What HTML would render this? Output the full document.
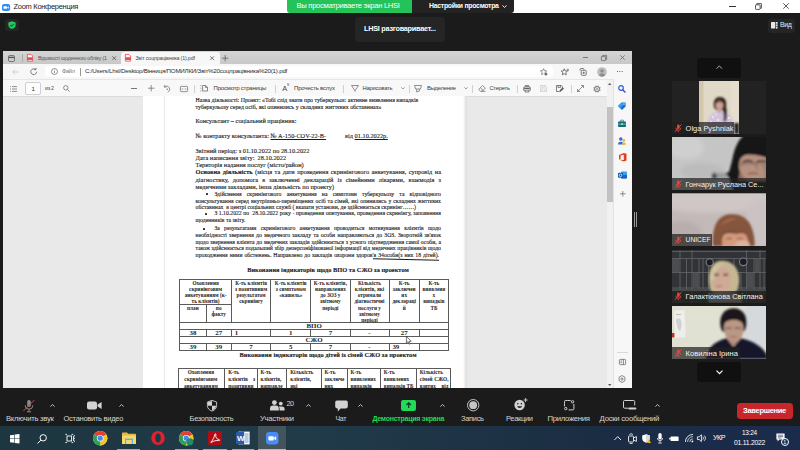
<!DOCTYPE html>
<html><head><meta charset="utf-8"><title>Zoom</title>
<style>
*{box-sizing:border-box;margin:0;padding:0}
html,body{width:800px;height:450px;overflow:hidden;background:#1b1b1b;font-family:"Liberation Sans",sans-serif}
.a{position:absolute;white-space:nowrap}
svg{position:absolute;overflow:visible}
#titlebar{left:0;top:0;width:800px;height:13.100px;background:#fff}
#br{left:3.2px;top:50.5px;width:628.9px;height:338px;background:#e9e9e9;overflow:hidden}
.ui{font-size:6.4px;color:#3a3a3a;letter-spacing:-0.32px;line-height:8px}
.sep{width:1px;height:8px;background:#d0d0d0;top:33px}
.pl{-webkit-text-stroke:.12px #1c1c1c;font-family:"Liberation Serif",serif;font-size:6.33px;line-height:7px;height:7px;color:#1c1c1c;left:192.6px}
.pj{width:245.4px;text-align:justify;text-align-last:justify;white-space:normal}
.ps{font-size:5.74px}
.p11{font-size:5.9px}
.th{font-family:"Liberation Serif",serif;font-weight:bold;font-size:5.25px;line-height:6.1px;color:#222;text-align:center;white-space:normal}
.td{font-family:"Liberation Serif",serif;font-weight:bold;font-size:6.9px;line-height:7px;color:#1c1c1c;text-align:center}
.ln{background:#5a5a5a}
.zl{font-size:7.1px;color:#d6d6d6;line-height:9px;top:414.5px;text-align:center;transform:translateX(-50%)}
.tile{left:672px;width:94px;height:53px;background:#222;overflow:hidden}
.nm{left:0;bottom:0;height:11.8px;background:rgba(32,32,32,.72)}
.arrow{left:697px;width:44px;height:20px;background:#101010;border-radius:3px}
</style></head><body>

<!-- Zoom title bar -->
<div class="a" id="titlebar">
 <svg style="left:1.9px;top:3.7px" width="8.1" height="6.9" viewBox="0 0 9 9" preserveAspectRatio="none"><rect width="9" height="9" rx="2.2" fill="#2d8cff"/><rect x="1.6" y="3" width="4" height="3.2" rx=".8" fill="#fff"/><path d="M6 4.2 L7.6 3.1 V6.100 L6 5z" fill="#fff"/></svg>
 <div class="a" style="left:13.6px;top:2.3px;font-size:7.5px;letter-spacing:-0.301px;line-height:9.38px;color:#1a1a1a;">Zoom Конференция</div>
 <div class="a" style="left:729px;top:6px;width:6.5px;height:1px;background:#333"></div>
 <svg style="left:755px;top:2.5px" width="7" height="7" viewBox="0 0 7 7" fill="none" stroke="#333" stroke-width=".8"><rect x=".5" y="1.8" width="4.6" height="4.6" rx=".6"/><path d="M1.8 1.8V.6H6.4V5.2H5.1"/></svg>
 <svg style="left:782.5px;top:3px" width="6" height="6" viewBox="0 0 6 6" stroke="#333" stroke-width=".8"><path d="M.3 .3L5.7 5.7M5.7 .3L.3 5.7"/></svg>
</div>
<div class="a" style="left:286.5px;top:0;width:126px;height:12.5px;background:#23c35a;border-radius:0 0 0 3px"></div><div class="a" style="left:296.5px;top:1.3px;font-size:7.58px;letter-spacing:-0.267px;line-height:9.47px;color:#fff;">Вы просматриваете экран LHSI</div>
<div class="a" style="left:412px;top:0;width:101.5px;height:12.5px;background:#232323;border-radius:0 0 3px 0"></div><div class="a" style="left:429.0px;top:1.7px;font-size:6.88px;letter-spacing:-0.274px;line-height:8.6px;color:#fff;font-weight:bold;">Настройки просмотра</div>
<svg style="left:502px;top:5px" width="5" height="3" viewBox="0 0 5 3" fill="none" stroke="#fff" stroke-width=".9"><path d="M.4 .4L2.5 2.4L4.6 .4"/></svg>
<!-- security shield -->
<div class="a" style="left:5px;top:18.600px;width:13.700px;height:12.800px;background:#262626;border-radius:3px"></div>
<svg style="left:7.7px;top:21.1px" width="8" height="8.2" viewBox="0 0 9 10" preserveAspectRatio="none"><path d="M4.5 .3L8.6 1.800V4.800C8.600 7.300 6.800 9 4.500 9.800C2.200 9 .4 7.300 .4 4.800V1.800Z" fill="#23c860"/><path d="M2.600 5L4 6.400L6.500 3.700" fill="none" stroke="#0f5a2c" stroke-width="1.2"/></svg>
<!-- speaking toast -->
<div class="a" style="left:355px;top:16.5px;width:90px;height:25px;background:#252525;border-radius:4px"></div><div class="a" style="left:364.0px;top:24.4px;font-size:7.29px;letter-spacing:-0.251px;line-height:9.11px;color:#fff;font-weight:bold;">LHSI разговаривает...</div>
<!-- View button -->
<div class="a" style="left:767.5px;top:18.5px;width:27.5px;height:14px;background:#252525;border-radius:3px"></div><div class="a" style="left:780.0px;top:21.2px;font-size:6.92px;letter-spacing:-0.410px;line-height:8.65px;color:#e8e8e8;">Вид</div>
<svg style="left:771px;top:22px" width="7" height="7" viewBox="0 0 7 7" fill="#e8e8e8"><rect x="0" y="0" width="4.3" height="6.6" rx=".5"/><rect x="5" y="0" width="1.6" height="1.8"/><rect x="5" y="2.4" width="1.6" height="1.8"/><rect x="5" y="4.8" width="1.6" height="1.8"/></svg>

<!-- shared browser window -->
<div class="a" id="br"><div class="a" style="left:-3.2px;top:-50.5px;width:800px;height:450px">
 <div class="a" style="left:3px;top:50px;width:629px;height:14px;background:linear-gradient(#d6d6d6,#c8c8c8)"></div>
 <div class="a" style="left:121px;top:52px;width:98.800px;height:12px;background:#f7f7f7;border-radius:2.5px 2.5px 0 0"></div>
 <div class="a" style="left:3px;top:64px;width:629px;height:15px;background:#f7f7f7"></div>
 <div class="a" style="left:45px;top:65.5px;width:508px;height:11.5px;background:#fff;border-radius:3px"></div>
 <div class="a" style="left:3px;top:79px;width:610px;height:17.6px;background:#f8f8f8;border-top:1px solid #e6e6e6;border-bottom:1px solid #dcdcdc"></div>
 <!-- tab strip -->
 <svg style="left:8px;top:54.5px" width="7" height="7" viewBox="0 0 7 7" fill="none" stroke="#585858" stroke-width=".75"><rect x=".5" y=".5" width="6" height="6" rx="1.2"/><path d="M.5 2.4H6.5" stroke-width="1.4"/></svg>
 <div class="a" style="left:22px;top:54px;width:1px;height:8px;background:#aaa"></div>
 <svg style="left:27px;top:54px" width="6" height="7.5" viewBox="0 0 6 7.5"><path d="M.4 .4H4L5.6 2V7.1H.4Z" fill="#fff" stroke="#e0484f" stroke-width=".8"/><rect x=".4" y="3.3" width="5.2" height="2.6" fill="#e0484f"/></svg>
 <div class="a" style="left:38.0px;top:54.5px;font-size:5.25px;letter-spacing:-0.172px;line-height:6.56px;color:#555;">Відомості щоденного обліку (1</div>
 <svg style="left:112px;top:56px" width="4.4" height="4.4" viewBox="0 0 4.4 4.4" stroke="#585858" stroke-width=".8"><path d="M.3 .3L4.1 4.1M4.1 .3L.3 4.1"/></svg>
 <svg style="left:125px;top:54px" width="6" height="7.5" viewBox="0 0 6 7.5"><path d="M.4 .4H4L5.6 2V7.1H.4Z" fill="#fff" stroke="#e0484f" stroke-width=".8"/><rect x=".4" y="3.3" width="5.2" height="2.6" fill="#e0484f"/></svg>
 <div class="a" style="left:135.6px;top:54.5px;font-size:5.29px;letter-spacing:-0.165px;line-height:6.61px;color:#444;">Звіт соцпрацівника (1).pdf</div>
 <svg style="left:209.8px;top:56px" width="4.4" height="4.4" viewBox="0 0 4.4 4.4" stroke="#585858" stroke-width=".8"><path d="M.3 .3L4.1 4.1M4.1 .3L.3 4.1"/></svg>
 <svg style="left:222px;top:54.5px" width="6.4" height="6.4" viewBox="0 0 6.4 6.4" stroke="#585858" stroke-width=".75"><path d="M3.2 0V6.4M0 3.2H6.4"/></svg>
 <div class="a" style="left:582.5px;top:57.3px;width:5px;height:.8px;background:#777"></div>
 <svg style="left:600.5px;top:54.5px" width="6" height="6" viewBox="0 0 6 6" fill="none" stroke="#6c6c6c" stroke-width=".8"><rect x=".4" y="1.4" width="4.2" height="4.2" rx=".6"/><path d="M1.6 1.4V.4H5.6V4.4H4.6"/></svg>
 <svg style="left:620px;top:55px" width="5" height="5" viewBox="0 0 5 5" stroke="#6c6c6c" stroke-width=".8"><path d="M.3 .3L4.7 4.7M4.7 .3L.3 4.7"/></svg>
 <!-- address bar -->
 <svg style="left:12px;top:68.5px" width="7" height="6" viewBox="0 0 7 6" fill="none" stroke="#c4c4c4" stroke-width=".75"><path d="M6.8 3H.6M3 .5L.5 3L3 5.5"/></svg>
 <svg style="left:29.5px;top:67.5px" width="7.5" height="7.5" viewBox="0 0 7.5 7.5" fill="none" stroke="#585858" stroke-width=".75"><path d="M6.6 3.75A2.9 2.9 0 1 1 5.6 1.5"/><path d="M4.1 1.6H6V-.2" stroke-width=".75"/></svg>
 <svg style="left:51px;top:68px" width="7" height="7" viewBox="0 0 7 7" fill="none" stroke="#666" stroke-width=".7"><circle cx="3.5" cy="3.5" r="3"/><path d="M3.5 3V5.2M3.5 1.6V2.3"/></svg>
 <div class="a" style="left:62.0px;top:67.9px;font-size:5.66px;letter-spacing:-0.305px;line-height:7.08px;color:#777;">Файл</div>
 <div class="a" style="left:80px;top:67.5px;width:1px;height:8px;background:#999"></div>
 <div class="a" style="left:85.0px;top:67.4px;font-size:6.21px;letter-spacing:-0.212px;line-height:7.76px;color:#2a2a2a;">C:/Users/Lhsl/Desktop/Вінниця/ПОМИЛКИ/Звіт%20соцпрацівника%20(1).pdf</div>
 <svg style="left:540px;top:67.5px" width="8" height="8" viewBox="0 0 8 8" fill="none" stroke="#6c6c6c" stroke-width=".75"><path d="M3.6 .7L4.5 2.7L6.7 2.9L5.1 4.3L5.4 5.2M3.6 .7L2.7 2.7L.5 2.9L2.1 4.4L1.6 6.6L3.4 5.6"/><circle cx="5.9" cy="6" r="1.5" fill="#6c6c6c" stroke="none"/></svg>
 <svg style="left:560.5px;top:67.5px" width="8" height="8" viewBox="0 0 8 8" fill="none" stroke="#585858" stroke-width=".8"><path d="M3.3 .8L4.2 2.9L6.4 3.1L4.8 4.6L5.3 6.8L3.3 5.7L1.3 6.8L1.8 4.6L.2 3.1L2.4 2.9Z"/><path d="M5.8 1.3H7.8M5.9 2.6H7.8" stroke-width=".7"/></svg>
 <svg style="left:579px;top:67.5px" width="8" height="8" viewBox="0 0 8 8" fill="none" stroke="#585858" stroke-width=".8"><path d="M1 2.6V1.5A.9 .9 0 0 1 1.9 .6H4.2A.9 .9 0 0 1 5.1 1.5"/><rect x="2.2" y="2.3" width="5" height="5" rx="1"/><path d="M4.7 3.6V6M3.5 4.8H5.9" stroke-width=".7"/></svg>
 <svg style="left:596.5px;top:66.8px" width="10" height="10" viewBox="0 0 10 10"><circle cx="5" cy="5" r="4.8" fill="#bdbdbd"/><circle cx="5" cy="3.9" r="1.7" fill="#8d8d8d"/><path d="M1.9 8.3A3.3 3.3 0 0 1 8.1 8.3A4.7 4.7 0 0 1 1.9 8.3Z" fill="#8d8d8d"/></svg>
 <div class="a" style="left:617.4px;top:71px;width:1.1px;height:1.1px;background:#333;border-radius:50%;box-shadow:2.3px 0 0 #333,4.6px 0 0 #333"></div>

 <!-- pdf toolbar -->
 <svg style="left:10px;top:85.5px" width="7" height="6" viewBox="0 0 7 6" stroke="#6c6c6c" stroke-width=".75"><path d="M0 .6H1M2 .6H7M0 3H1M2 3H7M0 5.4H1M2 5.4H7"/></svg>
 <div class="a" style="left:24.5px;top:82px;width:16.5px;height:12.5px;border:1px solid #cfcfcf;border-radius:2px;background:#fdfdfd"></div>
 <div class="a" style="left:31.4px;top:84.5px;font-size:6.16px;letter-spacing:-0.226px;line-height:7.7px;color:#333;">1</div>
 <div class="a" style="left:45.0px;top:85.0px;font-size:5.2px;letter-spacing:-0.209px;line-height:6.5px;color:#444;">из 2</div>
 <svg style="left:62.5px;top:84.5px" width="7" height="7" viewBox="0 0 7 7" fill="none" stroke="#6c6c6c" stroke-width=".75"><circle cx="2.8" cy="2.8" r="2.2"/><path d="M4.4 4.4L6.7 6.7"/></svg>
 <div class="a" style="left:131px;top:88px;width:6px;height:1px;background:#777"></div>
 <svg style="left:147.5px;top:85.3px" width="6.4" height="6.4" viewBox="0 0 6.4 6.4" stroke="#6c6c6c" stroke-width=".75"><path d="M3.2 0V6.4M0 3.2H6.4"/></svg>
 <svg style="left:163px;top:84.5px" width="8" height="8" viewBox="0 0 8 8" fill="none" stroke="#6c6c6c" stroke-width=".75"><path d="M1.6 1.8A3.1 3.1 0 1 1 4.6 7.1"/><path d="M1.4 .2V2.1H3.4"/><circle cx="4.2" cy="4.2" r=".7" fill="#6c6c6c" stroke="none"/></svg>
 <svg style="left:179.5px;top:85.5px" width="8" height="6" viewBox="0 0 8 6" fill="none" stroke="#6c6c6c" stroke-width=".75"><rect x=".4" y=".4" width="7.2" height="5.2" rx=".8"/><path d="M1.7 3H3.2M4.8 3H6.3"/></svg>
 <div class="a sep" style="left:193.5px;top:84.5px"></div>
 <svg style="left:200px;top:85px" width="8" height="6.5" viewBox="0 0 8 6.5" fill="none" stroke="#6c6c6c" stroke-width=".8"><path d="M.4 .6H1.4M.4 3.2H1.4M.4 5.8H1.4" /><path d="M2.6 .5H5.6L7.5 2.2V6H2.6Z"/><path d="M5.4 .6V2.4H7.4"/></svg>
 <div class="a" style="left:213.6px;top:84.5px;font-size:6.06px;letter-spacing:-0.229px;line-height:7.57px;color:#3a3a3a;">Просмотр страницы</div>
 <div class="a sep" style="left:274.5px;top:84.5px"></div>
 <div class="a" style="left:282.3px;top:83.8px;font-size:7.4px;color:#444;line-height:9px">A</div>
 <div class="a" style="left:287.3px;top:83px;font-size:4px;color:#444;line-height:5px">ᴺ</div>
 <div class="a" style="left:294.0px;top:84.5px;font-size:6.05px;letter-spacing:-0.219px;line-height:7.56px;color:#3a3a3a;">Прочесть вслух</div>
 <div class="a sep" style="left:342.5px;top:84.5px"></div>
 <svg style="left:350.5px;top:85px" width="8" height="7" viewBox="0 0 8 7" fill="none" stroke="#6c6c6c" stroke-width=".75"><path d="M.5 .5H7.5L4.6 4.9H3.4Z"/><path d="M4 5V6.8"/></svg>
 <div class="a" style="left:362.6px;top:84.6px;font-size:5.84px;letter-spacing:-0.232px;line-height:7.3px;color:#3a3a3a;">Нарисовать</div>
 <svg style="left:400.5px;top:87.3px" width="4" height="2.6" viewBox="0 0 4 2.6" fill="none" stroke="#777" stroke-width=".7"><path d="M.3 .3L2 2L3.7 .3"/></svg>
 <div class="a sep" style="left:409px;top:84.5px"></div>
 <svg style="left:414px;top:84.8px" width="8" height="7.4" viewBox="0 0 8 7.4" fill="none" stroke="#6c6c6c" stroke-width=".75"><path d="M.5 .5H7.5L6.4 4H1.6Z"/><path d="M2.6 4.2V6.9L5.4 6V4.2"/></svg>
 <div class="a" style="left:427.0px;top:84.6px;font-size:5.86px;letter-spacing:-0.257px;line-height:7.33px;color:#3a3a3a;">Выделение</div>
 <svg style="left:463.5px;top:87.3px" width="4" height="2.6" viewBox="0 0 4 2.6" fill="none" stroke="#777" stroke-width=".7"><path d="M.3 .3L2 2L3.7 .3"/></svg>
 <div class="a sep" style="left:472px;top:84.5px"></div>
 <svg style="left:477.5px;top:85px" width="8" height="7" viewBox="0 0 8 7" fill="none" stroke="#6c6c6c" stroke-width=".75"><path d="M4.6 .5L7.4 3.1L4.4 6.2H2.4L.7 4.5Z"/><path d="M2.4 2.7L5.2 5.4M3 6.3H7.4"/></svg>
 <div class="a" style="left:489.4px;top:84.7px;font-size:5.83px;letter-spacing:-0.243px;line-height:7.29px;color:#3a3a3a;">Стереть</div>
 <div class="a sep" style="left:517px;top:84.5px"></div>
 <svg style="left:523px;top:84.7px" width="8" height="7.6" viewBox="0 0 8 7.6" fill="none" stroke="#585858" stroke-width=".75"><path d="M.6 5.2V3.4A2 2 0 0 1 2.6 1.4H5.4A2 2 0 0 1 7.4 3.4V5.2Z"/><path d="M2 .6H6M2 5.2V7H6V5.2"/><path d="M1.2 3.3H6.8" stroke-width="1.3"/></svg>
 <svg style="left:539.5px;top:85px" width="7" height="7" viewBox="0 0 7 7" fill="none" stroke="#cdcdcd" stroke-width=".75"><path d="M.5 .5H5.3L6.5 1.7V6.5H.5Z"/><path d="M2 .6V2.4H4.6V.6M1.8 6.4V4H5.2V6.4"/></svg>
 <svg style="left:555.5px;top:85px" width="8" height="7" viewBox="0 0 8 7" fill="none" stroke="#585858" stroke-width=".75"><path d="M.5 .5H5.3L6.5 1.7V3M3.2 6.5H.5V.5"/><path d="M2 .6V2.4H4.6V.6"/><path d="M3.6 6.6L4 5.2L6.8 2.6L7.7 3.5L5 6.2Z" fill="#585858" stroke-width=".5"/></svg>
 <div class="a sep" style="left:570.5px;top:84.5px"></div>
 <svg style="left:576.5px;top:85px" width="7" height="7" viewBox="0 0 7 7" fill="none" stroke="#6c6c6c" stroke-width=".75"><path d="M.5 6.5L6.5 .5M4 .5H6.5V3M.5 4V6.5H3"/></svg>
 <svg style="left:592.5px;top:84.5px" width="8" height="8" viewBox="0 0 8 8" fill="none" stroke="#6c6c6c"><circle cx="4" cy="4" r="2.5" stroke-width=".8"/><path d="M6.31 4.96L7.33 5.38M4.96 6.31L5.38 7.33M3.04 6.31L2.62 7.33M1.69 4.96L0.67 5.38M1.69 3.04L0.67 2.62M3.04 1.69L2.62 0.67M4.96 1.69L5.38 0.67M6.31 3.04L7.33 2.62" stroke-width="1.1"/><circle cx="4" cy="4" r="1" stroke-width=".6"/></svg>

 <!-- scrollbar -->
 <div class="a" style="left:606.5px;top:80px;width:6.5px;height:308px;background:#f1f1f1"></div>
 <div class="a" style="left:607px;top:106.5px;width:6px;height:95px;background:#c2c2c2"></div>
 <svg style="left:608px;top:83px" width="3.4" height="2" viewBox="0 0 3.4 2"><path d="M0 2L1.7 0L3.4 2Z" fill="#555"/></svg>
 <svg style="left:608px;top:384px" width="3.4" height="2" viewBox="0 0 3.4 2"><path d="M0 0L1.7 2L3.4 0Z" fill="#555"/></svg>
 <!-- edge sidebar -->
 <div class="a" style="left:613px;top:79px;width:19px;height:309px;background:#f7f7f7;border-left:1px solid #e2e2e2"></div>
 <svg style="left:618px;top:84.5px" width="8" height="8" viewBox="0 0 8 8" fill="none"><circle cx="3" cy="3" r="2.3" stroke="#2a5fd0" stroke-width="1.2"/><path d="M4.7 4.7L7.4 7.4" stroke="#6a3bbf" stroke-width="1.4"/></svg>
 <svg style="left:618px;top:102px" width="8" height="8" viewBox="0 0 8 8"><path d="M3.6 .4H7.6V4.4L4 8L0 4Z" fill="#1c72c9"/><path d="M0 4L2 6L5.6 2.4L3.6 .4Z" fill="#3aa0f0"/><circle cx="6" cy="2" r=".7" fill="#fff"/></svg>
 <svg style="left:618px;top:120px" width="8" height="7" viewBox="0 0 8 7"><rect x="0" y="1.6" width="8" height="5.4" rx=".8" fill="#156a7c"/><rect x="2.4" y=".2" width="3.2" height="2" rx=".5" fill="none" stroke="#156a7c" stroke-width=".7"/><rect x="0" y="3.6" width="8" height="1" fill="#5bc3d3"/><rect x="3.3" y="3.2" width="1.4" height="1.8" fill="#d8f060"/></svg>
 <svg style="left:618px;top:136.5px" width="8" height="8" viewBox="0 0 8 8"><circle cx="2.8" cy="2" r="1.7" fill="#3a66d6"/><path d="M0 7.6A2.8 2.8 0 0 1 5.6 7.6Z" fill="#3a66d6"/><circle cx="5.8" cy="3.4" r="1.4" fill="#e7b43a"/><path d="M3.6 7.8A2.2 2.2 0 0 1 8 7.8Z" fill="#e7b43a"/></svg>
 <svg style="left:618.5px;top:153px" width="7.5" height="8.5" viewBox="0 0 7.5 8.5"><path d="M0 2L4.8 0L7.5 .8V7.6L4.8 8.5L0 6.5L4.8 7V1.7L1.6 2.6V5.8L0 6.5Z" fill="#e2411f"/></svg>
 <svg style="left:617.5px;top:170.5px" width="9" height="8" viewBox="0 0 9 8"><rect x="3" y=".5" width="6" height="7" rx=".8" fill="#3c9ce8"/><rect x="3" y="4" width="6" height="3.5" rx=".8" fill="#1866c0"/><rect x="0" y="1.8" width="5" height="5" rx=".8" fill="#0f5cb5"/><circle cx="2.5" cy="4.3" r="1.3" fill="none" stroke="#fff" stroke-width=".7"/></svg>
 <svg style="left:619.5px;top:190.5px" width="5.6" height="5.6" viewBox="0 0 5.6 5.6" stroke="#6c6c6c" stroke-width=".75"><path d="M2.8 0V5.6M0 2.8H5.6"/></svg>
 <div class="a" style="left:616.5px;top:352.3px;width:11.5px;height:1px;background:#dadada"></div>
 <svg style="left:618.8px;top:359px" width="7" height="6" viewBox="0 0 7 6" fill="none" stroke="#6c6c6c" stroke-width=".8"><rect x=".4" y=".4" width="6.2" height="5.2" rx=".8"/><path d="M4.4 .4V5.6M1.6 2H3M1.6 3.6H3" /></svg>
 <svg style="left:618.3px;top:374.5px" width="8" height="8" viewBox="0 0 8 8" fill="none" stroke="#6c6c6c" stroke-width=".8"><circle cx="4" cy="4" r="1.1"/><path d="M4 .5L6.9 2.2V5.8L4 7.5L1.1 5.8V2.2Z"/></svg>

 <!-- pdf page -->
 <div class="a" style="left:142.6px;top:96.4px;width:323.4px;height:292px;background:#fff"></div>
 <div class="a" style="left:163.5px;top:96px;width:1px;height:292px;background:#e9e9e9"></div>
 <div class="a" style="left:462.5px;top:96px;width:3.5px;height:292px;background:linear-gradient(90deg,#fff,#e2e2e2)"></div>
 <div class="a" style="left:466px;top:96px;width:1px;height:292px;background:#e0e0e0"></div>
 <div class="a pl p11" style="left:195.6px;top:97.4px;">Назва діяльності: Проект: «Тобі слід знати про туберкульоз: активне виявлення випадків</div>
 <div class="a pl p11" style="left:195.6px;top:104.4px;">туберкульозу серед осіб, які опинились у складних життєвих обставинах»</div>
 <div class="a pl " style="left:195.6px;top:117.4px;">Консультант – соціальний працівник:</div>
 <div class="a pl " style="left:195.6px;top:132.4px;">№ контракту консультанта: <u>№ А-150-COV-22-В-</u></div>
 <div class="a pl " style="left:345px;top:132.4px;">від <u>01.10.2022р.</u></div>
 <div class="a pl " style="left:195.6px;top:146.8px;">Звітний період: з 01.10.2022 по 28.10.2022</div>
 <div class="a pl " style="left:195.6px;top:154.0px;">Дата написання звіту:&nbsp; 28.10.2022</div>
 <div class="a pl " style="left:195.6px;top:161.0px;">Територія надання послуг (місто/район)</div>
 <div class="a pl pj" style="left:195.6px;top:168.4px;"><b>Основна діяльність</b> (місця та дати проведення скринінгового анкетування, супровід на</div>
 <div class="a pl pj" style="left:195.6px;top:175.8px;">діагностику, допомога в заключенні декларацій із сімейними лікарями, взаємодія з</div>
 <div class="a pl " style="left:195.6px;top:183.0px;">медичними закладами, інша діяльність по проекту)</div>
 <div class="a" style="left:206.4px;top:193.4px;width:1.7px;height:1.7px;background:#222;border-radius:50%"></div>
 <div class="a pl pj ps" style="left:214.4px;top:190.8px;width:226.6px">Здійснення скринінгового анкетування на симптоми туберкульозу та відповідного</div>
 <div class="a pl pj ps" style="left:195.6px;top:197.6px;">консультування серед внутрішньо-переміщених осіб та сімей, які опинились у складних життєвих</div>
 <div class="a pl ps" style="left:195.6px;top:204.2px;">обставинах&nbsp; в центрі соціальних служб ( вказати установи, де здійснюється скринінг……)</div>
 <div class="a" style="left:205.2px;top:213.2px;width:1.7px;height:1.7px;background:#222;border-radius:50%"></div>
 <div class="a pl pj ps" style="left:214.4px;top:210.4px;width:226.6px">З 1.10.2022 по&nbsp; 28.10.2022 року - проведення опитування, проведення скринінгу, заповнення</div>
 <div class="a pl ps" style="left:195.6px;top:216.6px;">щоденників та звіту.</div>
 <div class="a" style="left:203.2px;top:228.2px;width:1.7px;height:1.7px;background:#222;border-radius:50%"></div>
 <div class="a pl pj ps" style="left:214.4px;top:225.4px;width:226.6px">За результатами скринінгового анкетування проводиться мотивування клієнтів щодо</div>
 <div class="a pl pj ps" style="left:195.6px;top:232.4px;">необхідності звернення до медичного закладу та особи направляються  до  ЗОЗ. Зворотній  зв'язок</div>
 <div class="a pl pj ps" style="left:195.6px;top:238.8px;">щодо звернення клієнта до медичних закладів здійснюється з усного підтвердження самої особи, а</div>
 <div class="a pl pj ps" style="left:195.6px;top:245.4px;">також здійснюється подальший збір деперсоніфікованої інформації від медичних працівників щодо</div>
 <div class="a pl pj ps" style="left:195.6px;top:251.6px;width:243.4px">проходження ними обстежень. Направлено до закладів охорони здоров'я 34особи(з них 18 дітей).</div>
 <div class="a" style="left:373px;top:259px;width:66px;height:1.2px;background:#1a1a1a;transform:rotate(1.4deg)"></div>
 <div class="a pl" style="left:228px;width:200px;text-align:center;top:266px;font-weight:bold;font-size:6.39px">Виконання індикаторів щодо ВПО та СЖО за проектом</div>
 <div class="a ln" style="left:179.4px;top:279px;width:269.40000000000003px;height:.7px"></div>
 <div class="a ln" style="left:179.4px;top:304px;width:51.599999999999994px;height:.7px"></div>
 <div class="a ln" style="left:179.4px;top:322px;width:269.40000000000003px;height:.7px"></div>
 <div class="a ln" style="left:179.4px;top:329px;width:269.40000000000003px;height:.7px"></div>
 <div class="a ln" style="left:179.4px;top:336px;width:269.40000000000003px;height:.7px"></div>
 <div class="a ln" style="left:179.4px;top:342.5px;width:269.40000000000003px;height:.7px"></div>
 <div class="a ln" style="left:179.4px;top:350px;width:269.40000000000003px;height:.7px"></div>
 <div class="a ln" style="left:179.4px;top:279px;width:.7px;height:71px"></div>
 <div class="a ln" style="left:205.6px;top:304px;width:.7px;height:18px"></div>
 <div class="a ln" style="left:205.6px;top:329px;width:.7px;height:7px"></div>
 <div class="a ln" style="left:205.6px;top:342.5px;width:.7px;height:7.5px"></div>
 <div class="a ln" style="left:231px;top:279px;width:.7px;height:43px"></div>
 <div class="a ln" style="left:231px;top:329px;width:.7px;height:7px"></div>
 <div class="a ln" style="left:231px;top:342.5px;width:.7px;height:7.5px"></div>
 <div class="a ln" style="left:270.4px;top:279px;width:.7px;height:43px"></div>
 <div class="a ln" style="left:270.4px;top:329px;width:.7px;height:7px"></div>
 <div class="a ln" style="left:270.4px;top:342.5px;width:.7px;height:7.5px"></div>
 <div class="a ln" style="left:310.4px;top:279px;width:.7px;height:43px"></div>
 <div class="a ln" style="left:310.4px;top:329px;width:.7px;height:7px"></div>
 <div class="a ln" style="left:310.4px;top:342.5px;width:.7px;height:7.5px"></div>
 <div class="a ln" style="left:349.6px;top:279px;width:.7px;height:43px"></div>
 <div class="a ln" style="left:349.6px;top:329px;width:.7px;height:7px"></div>
 <div class="a ln" style="left:349.6px;top:342.5px;width:.7px;height:7.5px"></div>
 <div class="a ln" style="left:388.6px;top:279px;width:.7px;height:43px"></div>
 <div class="a ln" style="left:388.6px;top:329px;width:.7px;height:7px"></div>
 <div class="a ln" style="left:388.6px;top:342.5px;width:.7px;height:7.5px"></div>
 <div class="a ln" style="left:419px;top:279px;width:.7px;height:43px"></div>
 <div class="a ln" style="left:419px;top:329px;width:.7px;height:7px"></div>
 <div class="a ln" style="left:419px;top:342.5px;width:.7px;height:7.5px"></div>
 <div class="a ln" style="left:448px;top:279px;width:.7px;height:71px"></div>
 <div class="a th" style="left:180.20000000000002px;width:50.8px;top:280.2px;text-align:center">Охоплення<br>скринінговим<br>анкетуванням (к-<br>ть клієнтів)</div>
 <div class="a th" style="left:180.20000000000002px;width:25.399999999999988px;top:305.2px;text-align:center">план</div>
 <div class="a th" style="left:206.4px;width:24.600000000000005px;top:305.2px;text-align:center">по<br>факту</div>
 <div class="a th" style="left:231.8px;width:38.59999999999998px;top:280.2px;text-align:center">К-ть клієнтів<br>з позитивним<br>результатом<br>скринінгу</div>
 <div class="a th" style="left:271.2px;width:39.2px;top:280.2px;text-align:center">К-ть клієнтів<br>з симптомом<br>«кашель»</div>
 <div class="a th" style="left:311.2px;width:38.40000000000005px;top:280.2px;text-align:center">К-ть клієнтів,<br>направлених<br>до ЗОЗ у<br>звітному<br>періоді</div>
 <div class="a th" style="left:350.40000000000003px;width:38.2px;top:280.2px;text-align:center">Кількість<br>клієнтів, які<br>отримали<br>діагностичні<br>послуги у<br>звітному<br>періоді</div>
 <div class="a th" style="left:389.40000000000003px;width:29.599999999999977px;top:280.2px;text-align:center">К-ть<br>заключен<br>их<br>деклараці<br>й</div>
 <div class="a th" style="left:419.8px;width:28.2px;top:280.2px;text-align:center">К-ть<br>виявлени<br>х<br>випадків<br>ТБ</div>
 <div class="a td" style="left:180.20000000000002px;width:267.8px;top:322.3px;text-align:center">ВПО</div>
 <div class="a td" style="left:180.20000000000002px;width:25.399999999999988px;top:329.3px;text-align:center">38</div>
 <div class="a td" style="left:206.4px;width:24.600000000000005px;top:329.3px;text-align:center">27</div>
 <div class="a td" style="left:234.8px;width:38.59999999999998px;top:329.3px;text-align:left">1</div>
 <div class="a td" style="left:271.2px;width:39.2px;top:329.3px;text-align:center">1</div>
 <div class="a td" style="left:311.2px;width:38.40000000000005px;top:329.3px;text-align:center">7</div>
 <div class="a td" style="left:350.40000000000003px;width:38.2px;top:329.3px;text-align:center">-</div>
 <div class="a td" style="left:389.40000000000003px;width:29.599999999999977px;top:329.3px;text-align:center">27</div>
 <div class="a td" style="left:180.20000000000002px;width:267.8px;top:335.9px;text-align:center">СЖО</div>
 <div class="a td" style="left:180.20000000000002px;width:25.399999999999988px;top:343px;text-align:center">39</div>
 <div class="a td" style="left:206.4px;width:24.600000000000005px;top:343px;text-align:center">39</div>
 <div class="a td" style="left:231.8px;width:38.59999999999998px;top:343px;text-align:center">7</div>
 <div class="a td" style="left:271.2px;width:39.2px;top:343px;text-align:center">5</div>
 <div class="a td" style="left:311.2px;width:38.40000000000005px;top:343px;text-align:center">7</div>
 <div class="a td" style="left:350.40000000000003px;width:38.2px;top:343px;text-align:center">-</div>
 <div class="a td" style="left:392.40000000000003px;width:29.599999999999977px;top:343px;text-align:left">39</div>
 <div class="a pl" style="left:228px;width:200px;text-align:center;top:351px;font-weight:bold;font-size:6.39px">Виконання індикаторів щодо дітей із сімей СЖО за проектом</div>
 <div class="a ln" style="left:178px;top:368px;width:272.8px;height:.7px"></div>
 <div class="a ln" style="left:178px;top:368px;width:.7px;height:22px"></div>
 <div class="a ln" style="left:224.4px;top:368px;width:.7px;height:22px"></div>
 <div class="a ln" style="left:256.6px;top:368px;width:.7px;height:22px"></div>
 <div class="a ln" style="left:286.4px;top:368px;width:.7px;height:22px"></div>
 <div class="a ln" style="left:320.7px;top:368px;width:.7px;height:22px"></div>
 <div class="a ln" style="left:346.6px;top:368px;width:.7px;height:22px"></div>
 <div class="a ln" style="left:380px;top:368px;width:.7px;height:22px"></div>
 <div class="a ln" style="left:416px;top:368px;width:.7px;height:22px"></div>
 <div class="a ln" style="left:450px;top:368px;width:.7px;height:22px"></div>
 <div class="a th" style="left:178.8px;width:44.10000000000001px;top:369px;line-height:7px;text-align:center;">Охоплення<br>скринінговим<br>анкетуванням</div>
 <div class="a th" style="left:228.20000000000002px;width:26.900000000000016px;top:369px;line-height:7px;text-align:justify;text-align-last:justify;">К-ть<br>клієнтів з<br>позитивни</div>
 <div class="a th" style="left:260.40000000000003px;width:24.499999999999954px;top:369px;line-height:7px;text-align:left;">К-ть<br>клієнтів,<br>направле</div>
 <div class="a th" style="left:290.2px;width:29.000000000000014px;top:369px;line-height:7px;text-align:left;">Кількість<br>клієнтів,<br>які</div>
 <div class="a th" style="left:324.5px;width:20.600000000000033px;top:369px;line-height:7px;text-align:left;">К-ть<br>заключе<br>них</div>
 <div class="a th" style="left:350.40000000000003px;width:28.09999999999998px;top:369px;line-height:7px;text-align:left;">К-ть<br>виявлених<br>випадків</div>
 <div class="a th" style="left:383.8px;width:30.700000000000003px;top:369px;line-height:7px;text-align:left;">К-ть<br>виявлених<br>випадків ТБ</div>
 <div class="a th" style="left:419.8px;width:28.700000000000003px;top:369px;line-height:7px;text-align:justify;text-align-last:justify;">Кількість<br>сімей СЖО,<br>взятих від</div>
 <svg style="left:405.5px;top:335.5px" width="6" height="9" viewBox="0 0 6 9"><path d="M.4 .4V7L2 5.6L3.1 8.2L4.1 7.8L3 5.3H5.2Z" fill="#fff" stroke="#222" stroke-width=".6"/></svg>
</div></div>

<!-- resize handle -->
<div class="a" style="left:633.8px;top:212px;width:.9px;height:15px;background:#9a9a9a"></div><div class="a" style="left:636.3px;top:212px;width:.9px;height:15px;background:#9a9a9a"></div>
<!-- participants strip -->
<svg width="0" height="0" style="left:0;top:0"><defs>
 <filter id="b1" x="-20%" y="-20%" width="140%" height="140%"><feGaussianBlur stdDeviation=".9"/></filter>
 <filter id="b2" x="-20%" y="-20%" width="140%" height="140%"><feGaussianBlur stdDeviation="2"/></filter>
 <filter id="b0" x="-20%" y="-20%" width="140%" height="140%"><feGaussianBlur stdDeviation=".5"/></filter>
 <filter id="nz" x="0" y="0" width="100%" height="100%"><feTurbulence type="fractalNoise" baseFrequency=".35" numOctaves="2" seed="4"/><feColorMatrix values="0 0 0 0 .5  0 0 0 0 .5  0 0 0 0 .5  .9 0 0 0 -.32"/></filter>
</defs></svg>
<div class="a arrow" style="top:57.5px"><svg style="left:18.7px;top:7.3px" width="6.6" height="4.2" viewBox="0 0 6.6 4.2" fill="none" stroke="#a8a8a8" stroke-width="1"><path d="M.5 3.8L3.3 .8L6.1 3.8"/></svg></div>
<div class="a tile" style="top:81px"><svg style="left:0;top:0;overflow:hidden" width="94" height="53" viewBox="0 0 94 53">
<rect x="27" y="0" width="40" height="53" fill="#e1d9c8"/>
<rect x="27" y="0" width="4.5" height="53" fill="#d3c8ae"/>
<rect x="59" y="0" width="8" height="53" fill="#e5decf"/>
<g filter="url(#b1)">
<path d="M62 42H67V53H60Z" fill="#2a2624"/>
<path d="M34.500 53C34 38 38.500 30 48 30C57.500 30 62.500 38 62 53Z" fill="#d2c3dc"/>
<path d="M42 26C41 19 44 16 48 16C52.5 16 55 19.5 54 26C55 31 55.5 36 53.5 41L51.5 40C52.5 35 51.5 31 50.5 29H44Z" fill="#2a1c19"/>
<ellipse cx="47.5" cy="24.2" rx="3.7" ry="4.9" fill="#cda28f"/>
<path d="M43.6 22C45 19 50 19 52 22C50 20.5 46 20.5 43.6 22Z" fill="#2a1c19"/>
<rect x="45.8" y="28" width="3.4" height="3.4" fill="#c79c8a"/>
</g>
<g filter="url(#b0)" fill="#e9e0ee"><circle cx="41" cy="36" r="1.3"/><circle cx="46" cy="39" r="1.2"/><circle cx="57" cy="37" r="1.3"/><circle cx="39" cy="41" r="1.2"/><circle cx="44" cy="33.5" r="1"/></g></svg><div class="a nm" style="width:62.4px"><svg style="left:2.2px;top:1.6px" width="8.6" height="8.6" viewBox="0 0 8 8"><rect x="2.9" y=".4" width="2.2" height="4.2" rx="1.1" fill="#e8483a"/><path d="M1.6 3.5A2.4 2.4 0 0 0 6.4 3.5M4 6V7.5" fill="none" stroke="#e8483a" stroke-width=".75"/><path d="M.9 7.4L7 .3" stroke="#e8483a" stroke-width=".85"/></svg></div><div class="a" style="left:13.6px;top:42.9px;font-size:7.44px;letter-spacing:0.002px;line-height:9.3px;color:#f2f2f2;">Olga Pyshniak</div></div>
<div class="a tile" style="top:137px"><svg style="left:0;top:0;overflow:hidden" width="94" height="53" viewBox="0 0 94 53">
<rect width="94" height="53" fill="#c6c6c6"/>
<rect width="94" height="53" filter="url(#nz)" opacity=".55"/>
<g filter="url(#b2)">
<ellipse cx="14" cy="10" rx="18" ry="12" fill="#d2d2d2" opacity=".8"/>
<ellipse cx="30" cy="34" rx="22" ry="8" fill="#b9b9b9" opacity=".8"/>
</g>
<g filter="url(#b1)">
<path d="M39.5 41.5V36.5L42 34.5L46 36L50 35.5L57 37.5L58 41.5Z" fill="#9a9c9f"/>
<path d="M40 41.5V37.5L43 36L45.5 39.5L44 41.5Z" fill="#4c4e52"/>
<path d="M56 36C58 34 58 30 60 24C62 12 66 3 72 -2H96V55H62C60 48 59 42 53 35.5Z" fill="#151316"/>
<path d="M67 30C66.5 22 70 17 78 17.5C86 18 92 19 96 22V44H76C71 42 67.5 37 67 30Z" fill="#b4907f"/>
<path d="M66 24C69 16 76 15 82 17C88 19 92 19 96 21V10H66Z" fill="#151316"/>
<path d="M68 26C72 22 78 22 82 25C86 22.500 91 22.500 96 24V28C90 26.500 86 27 83 28.500C78 26.500 72 27 68 30Z" fill="#96766a"/><path d="M71.5 24.800C74 23.300 78 23.300 80.500 24.800M85 24.800C88 23.300 91 23.300 94 24.300" stroke="#33231f" stroke-width="1.4" fill="none"/><path d="M88 28C92 30 94 36 92 42H96V28Z" fill="#a07f70"/>
<path d="M83 26C84.5 29 86 31 85 33" stroke="#98705f" stroke-width="1.2" fill="none"/>
<path d="M76 37C79 36 83 36 86 37" stroke="#7c4f45" stroke-width="1.2" fill="none"/>
<path d="M68 33C69 38 72 42 77 44H66Z" fill="#8a6a5c"/>
</g></svg><div class="a nm" style="width:94px"><svg style="left:2.2px;top:1.6px" width="8.6" height="8.6" viewBox="0 0 8 8"><rect x="2.9" y=".4" width="2.2" height="4.2" rx="1.1" fill="#e8483a"/><path d="M1.6 3.5A2.4 2.4 0 0 0 6.4 3.5M4 6V7.5" fill="none" stroke="#e8483a" stroke-width=".75"/><path d="M.9 7.4L7 .3" stroke="#e8483a" stroke-width=".85"/></svg></div><div class="a" style="left:13.6px;top:43.0px;font-size:7.28px;letter-spacing:0.000px;line-height:9.1px;color:#f2f2f2;">Гончарук Руслана Се...</div></div>
<div class="a tile" style="top:193px"><svg style="left:0;top:0;overflow:hidden" width="94" height="53" viewBox="0 0 94 53">
<rect width="94" height="53" fill="#c3b9b9"/>
<g filter="url(#b2)"><ellipse cx="40" cy="6" rx="60" ry="14" fill="#cfc6c6"/><ellipse cx="88" cy="30" rx="14" ry="24" fill="#cbc2c3"/><ellipse cx="10" cy="40" rx="20" ry="12" fill="#b8aeae"/></g>
<rect width="94" height=".8" fill="#8f8a8a"/>
<g filter="url(#b1)">
<path d="M41 53C40 42 42 33 46 27.5C50 22 57 20.5 63 21.5C70 22 76 26 79 33C82 40 83 47 82.5 53Z" fill="#85543c"/>
<path d="M48 33C52 26 60 24 66 26C60 27 53 30 48 33Z" fill="#a06a4c"/>
<path d="M50.5 53C49 46 51 41 55 39.5C60 38 68 38 72 40.5C76 43 76.5 48 75.5 53Z" fill="#d39a7c"/>
<path d="M49 42C53 36.5 60 36.5 64 38.5C68 37 73 38.5 76 42C72 40 68 40 64 41C59 39.5 54 40 49 42Z" fill="#7a4c3a"/>
<path d="M54 45.5H60M65 45.5H71" stroke="#5e3a30" stroke-width="1.1"/>
<path d="M64 50C66 47.5 72 46.5 76 48.5C78 49.5 78 52 77 53H63Z" fill="#dcb29c"/>
</g></svg><div class="a nm" style="width:40px"><svg style="left:2.2px;top:1.6px" width="8.6" height="8.6" viewBox="0 0 8 8"><rect x="2.9" y=".4" width="2.2" height="4.2" rx="1.1" fill="#e8483a"/><path d="M1.6 3.5A2.4 2.4 0 0 0 6.4 3.5M4 6V7.5" fill="none" stroke="#e8483a" stroke-width=".75"/><path d="M.9 7.4L7 .3" stroke="#e8483a" stroke-width=".85"/></svg></div><div class="a" style="left:13.6px;top:43.3px;font-size:6.69px;letter-spacing:-0.000px;line-height:8.36px;color:#f2f2f2;">UNICEF</div></div>
<div class="a tile" style="top:249.5px"><svg style="left:0;top:0;overflow:hidden" width="94" height="53" viewBox="0 0 94 53">
<rect width="94" height="53" fill="#323336"/>
<g filter="url(#b0)">
<g stroke="#74767a" stroke-width=".8" opacity=".75">
<path d="M0 1.5H94M0 8.5H94M0 22.5H94M0 38H94"/>
<path d="M8 0V53M14.5 8V40M20 0V53M27 8V40M31 8V40M36.5 14V40M62 8V40M69 22V40M74.5 0V53M82 8V40M88 0V53M92 8V40" />
</g>
<g fill="#4c4d50"><rect x="0" y="9" width="7.5" height="13"/><rect x="75" y="23" width="6.5" height="14.5"/><rect x="21" y="23" width="5.5" height="14.5"/><rect x="83" y="9" width="4.5" height="13"/></g>
<circle cx="37.7" cy="12.4" r="3.6" fill="#1c1d20" stroke="#7b7e83" stroke-width="1.1"/>
<circle cx="71.3" cy="11.8" r="3.8" fill="#1c1d20" stroke="#7b7e83" stroke-width="1.1"/>
<rect x="0" y="39" width="94" height="2.5" fill="#46484b"/>
</g>
<g filter="url(#b1)">
<path d="M37 33C36 22 39 13 47 11C56 9.5 64 14 66.5 24C68 31 67 38 64 42H40C38 40 37.5 37 37 33Z" fill="#c4b792"/>
<path d="M40 31C39.5 24 42 18 47.5 17C53 16 58 19 59 26C60 33 58 40 53 42H46C42 40 40.5 36 40 31Z" fill="#cfaa96"/>
<path d="M38.5 30C38 19 44 12.5 52 13.5C47 15.5 42.5 21 42 30Z" fill="#d2c6a2"/>
<path d="M42.300 25.300H47M51.300 25.300H56" stroke="#4e3a32" stroke-width="1.4"/><path d="M41.500 23.200H47.500M51 23.200H57" stroke="#9a8468" stroke-width=".8"/>
<path d="M44 36.5C46 35.8 48 35.8 50 36.5" stroke="#a06a5e" stroke-width="1.1" fill="none"/>
<path d="M36 53V45C40 42.5 44 42 50 42C58 42 64 43 70 46V53Z" fill="#b9ad98"/>
</g></svg><div class="a nm" style="width:94px"><svg style="left:2.2px;top:1.6px" width="8.6" height="8.6" viewBox="0 0 8 8"><rect x="2.9" y=".4" width="2.2" height="4.2" rx="1.1" fill="#e8483a"/><path d="M1.6 3.5A2.4 2.4 0 0 0 6.4 3.5M4 6V7.5" fill="none" stroke="#e8483a" stroke-width=".75"/><path d="M.9 7.4L7 .3" stroke="#e8483a" stroke-width=".85"/></svg></div><div class="a" style="left:13.6px;top:42.9px;font-size:7.37px;letter-spacing:-0.000px;line-height:9.21px;color:#f2f2f2;">Галактіонова Світлана</div></div>
<div class="a tile" style="top:306px"><svg style="left:0;top:0;overflow:hidden" width="94" height="53" viewBox="0 0 94 53">
<rect width="94" height="53" fill="#e0e0d3"/>
<g filter="url(#b2)"><ellipse cx="85" cy="18" rx="16" ry="26" fill="#d6d9dc"/><ellipse cx="30" cy="10" rx="16" ry="12" fill="#e2e2d2"/></g>
<g filter="url(#b0)">
<path d="M1.8 4.5L12.6 4L13.6 31L2.6 32Z" fill="#eeeeec"/>
<path d="M4 14C5 12 8 12 9 14.5C10 18 9.5 22 8 25C6 24 4.5 20 4 14Z" fill="#cfd0d2"/>
<rect x="4" y="8.2" width="5" height=".8" fill="#c9a9a4"/>
<rect x="0" y="27" width="2.4" height="4.4" fill="#b7362f"/>
</g>
<g filter="url(#b1)">
<path d="M34 53C35 44 40 38 48 34.5C52 32.5 56 31.5 61 31.5C67 31.5 72 32.5 78 35C86 38.5 92 43 95 49V53Z" fill="#16182a"/>
<path d="M48.5 20C47 10 52 2.5 61 2.3C70 2 75.5 9 74.2 19C73.8 23 72.5 25 71 26H51.5C50 25 49 23 48.500 20Z" fill="#1a181b"/>
<path d="M52 23C51.5 16 55 11.5 61 11.5C67.5 11.5 71.5 16 71.500 23C71.5 30 67.5 36.8 61.500 36.8C56 36.8 52.5 30 52 23Z" fill="#bb9785"/>
<path d="M51 18.5C53 11.5 58 9.5 62 9.8C67 10 71 13 72.5 18.500C69 15 65 13.500 61 13.800C57 14 53.5 15.500 51 18.500Z" fill="#1a181b"/>
<path d="M53.5 22.200H59.200M63 22.200H69" stroke="#6e5a55" stroke-width="1.4"/>
<path d="M53 21.800H70" stroke="#8b7a76" stroke-width=".5"/>
<path d="M58 31.200C60 30.600 62.500 30.600 64.500 31.200" stroke="#8f5f58" stroke-width="1" fill="none"/>
<path d="M56 34.500L61.500 41L67 34.500C64 37 59 37 56 34.500Z" fill="#b48f7e"/>
</g></svg><div class="a nm" style="width:67.7px"><svg style="left:2.2px;top:1.6px" width="8.6" height="8.6" viewBox="0 0 8 8"><rect x="2.9" y=".4" width="2.2" height="4.2" rx="1.1" fill="#e8483a"/><path d="M1.6 3.5A2.4 2.4 0 0 0 6.4 3.5M4 6V7.5" fill="none" stroke="#e8483a" stroke-width=".75"/><path d="M.9 7.4L7 .3" stroke="#e8483a" stroke-width=".85"/></svg></div><div class="a" style="left:13.6px;top:42.8px;font-size:7.57px;letter-spacing:0.000px;line-height:9.46px;color:#f2f2f2;">Ковиліна Ірина</div></div>
<div class="a arrow" style="top:362px"><svg style="left:18.5px;top:7.6px" width="7" height="4.4" viewBox="0 0 7 4.4" fill="none" stroke="#fff" stroke-width="1.15"><path d="M.5 .6L3.5 3.7L6.5 .6"/></svg></div>

<!-- zoom meeting toolbar -->
<div class="a" style="left:0;top:388.4px;width:800px;height:37.2px;background:#1b1b1b"></div>
<svg style="left:22px;top:398.5px" width="14" height="14" viewBox="0 0 14 14"><rect x="5.2" y="1" width="3.6" height="7" rx="1.8" fill="#8c8c8c"/><path d="M3.2 6.4A3.8 3.8 0 0 0 10.8 6.4M7 10.2V12.6M5 12.8H9" fill="none" stroke="#8c8c8c" stroke-width="1"/><path d="M1.4 12L12.6 .8" stroke="#e0453a" stroke-width="1"/></svg>
<svg style="left:49.5px;top:403.5px" width="5" height="3" viewBox="0 0 5 3" fill="none" stroke="#cfcfcf" stroke-width=".9"><path d="M.4 2.6L2.5 .5L4.6 2.6"/></svg>
<div class="a" style="left:6.0px;top:414.2px;font-size:7.7px;letter-spacing:-0.279px;line-height:9.62px;color:#d6d6d6;">Включить звук</div>
<svg style="left:86.5px;top:401px" width="15" height="9" viewBox="0 0 15 9" fill="#d2d2d2"><rect x="0" y=".5" width="10" height="8" rx="2"/><path d="M10.6 3.6L14.6 1V8L10.6 5.4Z"/></svg>
<svg style="left:118.5px;top:403.5px" width="5" height="3" viewBox="0 0 5 3" fill="none" stroke="#cfcfcf" stroke-width=".9"><path d="M.4 2.6L2.5 .5L4.6 2.6"/></svg>
<div class="a" style="left:63.5px;top:414.3px;font-size:7.53px;letter-spacing:-0.278px;line-height:9.41px;color:#d6d6d6;">Остановить видео</div>
<svg style="left:207px;top:399.5px" width="10" height="11.5" viewBox="0 0 10 11.5"><path d="M5 .4L9.6 2V5.6C9.6 8.4 7.6 10.3 5 11.1C2.4 10.3 .4 8.4 .4 5.6V2Z" fill="none" stroke="#d2d2d2" stroke-width=".9"/><path d="M5 1V5.7H.9V2.3Z" fill="#d2d2d2"/><path d="M5 5.7H9.1C9 8 7.2 9.8 5 10.5Z" fill="#d2d2d2"/></svg>
<div class="a" style="left:189.6px;top:414.4px;font-size:7.38px;letter-spacing:-0.280px;line-height:9.22px;color:#d6d6d6;">Безопасность</div>
<svg style="left:269.5px;top:400px" width="15" height="11" viewBox="0 0 15 11" fill="#d2d2d2"><circle cx="4.4" cy="2.6" r="2.4"/><path d="M0 10.6V8.6A3 3 0 0 1 3 5.6H5.8A3 3 0 0 1 8.8 8.6V10.6Z"/><circle cx="10.8" cy="3.6" r="1.9"/><path d="M9.6 10.6V8.4A3.6 3.6 0 0 0 8.8 6.4H12A2.6 2.6 0 0 1 14.6 9V10.6Z"/></svg>
<div class="a" style="left:286.5px;top:399.4px;font-size:7.31px;letter-spacing:-0.531px;line-height:9.14px;color:#d6d6d6;">20</div>
<svg style="left:305.5px;top:403.5px" width="5" height="3" viewBox="0 0 5 3" fill="none" stroke="#cfcfcf" stroke-width=".9"><path d="M.4 2.6L2.5 .5L4.6 2.6"/></svg>
<div class="a" style="left:260.0px;top:414.2px;font-size:7.61px;letter-spacing:-0.295px;line-height:9.51px;color:#d6d6d6;">Участники</div>
<svg style="left:335px;top:399.5px" width="13" height="12" viewBox="0 0 13 12" fill="#d2d2d2"><path d="M2 .4H11A1.8 1.8 0 0 1 12.8 2.2V6.6A1.8 1.8 0 0 1 11 8.4H5.6L2.8 11.4V8.4H2A1.8 1.8 0 0 1 .2 6.6V2.2A1.8 1.8 0 0 1 2 .4Z"/></svg>
<svg style="left:358.1px;top:403.5px" width="5" height="3" viewBox="0 0 5 3" fill="none" stroke="#cfcfcf" stroke-width=".9"><path d="M.4 2.6L2.5 .5L4.6 2.6"/></svg>
<div class="a" style="left:335.6px;top:414.6px;font-size:6.97px;letter-spacing:-0.381px;line-height:8.71px;color:#d6d6d6;">Чат</div>
<div class="a" style="left:401px;top:400px;width:14.5px;height:10.6px;background:#23d959;border-radius:2.2px"></div>
<svg style="left:405.6px;top:402.3px" width="5.4" height="6" viewBox="0 0 5.4 6" fill="none" stroke="#12301a" stroke-width="1.1"><path d="M2.7 6V1M.5 3L2.7 .8L4.9 3"/></svg>
<svg style="left:439.5px;top:403.5px" width="5" height="3" viewBox="0 0 5 3" fill="none" stroke="#cfcfcf" stroke-width=".9"><path d="M.4 2.6L2.5 .5L4.6 2.6"/></svg>
<div class="a" style="left:372.4px;top:414.6px;font-size:7.07px;letter-spacing:-0.278px;line-height:8.84px;color:#23d959;font-weight:bold;">Демонстрация экрана</div>
<svg style="left:466.5px;top:399px" width="12.4" height="12.4" viewBox="0 0 12.4 12.4"><circle cx="6.2" cy="6.2" r="5.7" fill="none" stroke="#d2d2d2" stroke-width=".9"/><circle cx="6.2" cy="6.2" r="3.9" fill="#c4c4c4"/></svg>
<div class="a" style="left:461.0px;top:414.3px;font-size:7.5px;letter-spacing:-0.322px;line-height:9.38px;color:#d6d6d6;">Запись</div>
<svg style="left:513.5px;top:398px" width="14" height="13" viewBox="0 0 14 13"><circle cx="5.6" cy="7" r="5.2" fill="#d2d2d2"/><circle cx="3.8" cy="5.8" r=".8" fill="#1b1b1b"/><circle cx="7.4" cy="5.8" r=".8" fill="#1b1b1b"/><path d="M3 8.2A2.8 2.8 0 0 0 8.2 8.2Z" fill="#1b1b1b"/><path d="M11.6 0V4M9.6 2H13.6" stroke="#d2d2d2" stroke-width=".9"/></svg>
<div class="a" style="left:506.0px;top:414.3px;font-size:7.48px;letter-spacing:-0.316px;line-height:9.35px;color:#d6d6d6;">Реакции</div>
<svg style="left:564px;top:400px" width="10.4" height="10.4" viewBox="0 0 10.4 10.4" fill="none" stroke="#d2d2d2" stroke-width="1"><path d="M.5 3.4V1.6A1.1 1.1 0 0 1 1.6 .5H3.4M9.9 7V8.8A1.1 1.1 0 0 1 8.8 9.9H4.6M7 .5H6.6M.5 6.2V6"/><circle cx="8.6" cy="1.8" r="1.2"/><circle cx="1.8" cy="8.6" r="1.2"/><path d="M.5 3.4V6.2M3.4 .5H6.4M9.9 4V7"/></svg>
<div class="a" style="left:547.6px;top:414.2px;font-size:7.75px;letter-spacing:-0.327px;line-height:9.69px;color:#d6d6d6;">Приложения</div>
<svg style="left:623px;top:400px" width="13" height="10.5" viewBox="0 0 13 10.5" fill="none" stroke="#d2d2d2" stroke-width="1"><path d="M5 8.2H1.6A1.1 1.1 0 0 1 .5 7.1V1.6A1.1 1.1 0 0 1 1.6 .5H10.6A1.1 1.1 0 0 1 11.7 1.6V5.4"/><path d="M6.2 8.6H12.4" stroke-width="2" stroke-linecap="round"/></svg>
<svg style="left:655.1px;top:403.5px" width="5" height="3" viewBox="0 0 5 3" fill="none" stroke="#cfcfcf" stroke-width=".9"><path d="M.4 2.6L2.5 .5L4.6 2.6"/></svg>
<div class="a" style="left:599.6px;top:414.2px;font-size:7.75px;letter-spacing:-0.297px;line-height:9.69px;color:#d6d6d6;">Доски сообщений</div>
<div class="a" style="left:736.5px;top:403.3px;width:56.5px;height:15.4px;background:#c9262c;border-radius:3.5px"></div><div class="a" style="left:743.0px;top:406.3px;font-size:7.59px;letter-spacing:-0.335px;line-height:9.49px;color:#fff;font-weight:bold;">Завершение</div>

<!-- windows taskbar -->
<div class="a" style="left:0;top:425.6px;width:800px;height:24.4px;background:linear-gradient(90deg,#1d3640 0%,#213b49 38%,#1e3446 56%,#1b2d43 75%,#1b2c4a 88%,#1a2b4c 100%)"></div>
<div class="a" style="left:258px;top:425.6px;width:27.6px;height:24.4px;background:#43545d"></div>
<div class="a" style="left:117px;top:448.8px;width:23px;height:1.2px;background:#7fb4d8"></div>
<div class="a" style="left:175px;top:448.8px;width:23px;height:1.2px;background:#7fb4d8"></div>
<div class="a" style="left:203px;top:448.8px;width:24px;height:1.2px;background:#7fb4d8"></div>
<div class="a" style="left:232px;top:448.8px;width:22px;height:1.2px;background:#7fb4d8"></div>
<div class="a" style="left:258px;top:448.8px;width:27.6px;height:1.2px;background:#8cc4ea"></div>
<svg style="left:9.5px;top:433.5px" width="9.5" height="9.5" viewBox="0 0 9.5 9.5" fill="#fff"><path d="M0 1.3L4.2 .7V4.5H0ZM4.8 .6L9.5 0V4.5H4.8ZM0 5H4.2V8.8L0 8.2ZM4.8 5H9.5V9.5L4.8 8.9Z"/></svg>
<svg style="left:37px;top:433.5px" width="10" height="10" viewBox="0 0 10 10" fill="none" stroke="#fff" stroke-width="1"><circle cx="6.2" cy="3.8" r="3.2"/><path d="M3.9 6.1L.5 9.5"/></svg>
<svg style="left:65px;top:434px" width="10" height="9" viewBox="0 0 10 9" fill="none" stroke="#fff" stroke-width=".9"><rect x="2" y="2" width="4.6" height="5"/><path d="M.4 .4H2M6.6 .4H8.2M.4 8.6H2M6.6 8.6H8.2M8.6 2V7" /><path d="M9.4 1V2.4M9.4 4V5M9.4 6.6V8" stroke-width=".8"/></svg>
<svg style="left:93px;top:431px" width="14.4" height="14.4" viewBox="0 0 14.4 14.4"><circle cx="7.2" cy="7.2" r="7.2" fill="#fff"/><path d="M7.2 7.2L.97 3.6A7.2 7.2 0 0 1 13.43 3.6Z" fill="#e3402e"/><path d="M7.2 7.2L13.43 3.6A7.2 7.2 0 0 1 7.2 14.4Z" fill="#f8c51c"/><path d="M7.2 7.2L7.2 14.4A7.2 7.2 0 0 1 .97 3.6Z" fill="#2ca14e"/><circle cx="7.2" cy="7.2" r="3.3" fill="#fff"/><circle cx="7.2" cy="7.2" r="2.6" fill="#4688f1"/></svg>
<svg style="left:122px;top:432px" width="14" height="12" viewBox="0 0 14 12"><path d="M0 1.2A.8 .8 0 0 1 .8 .4H5L6.2 1.8H13.2A.8 .8 0 0 1 14 2.6V11.2A.8 .8 0 0 1 13.2 12H.8A.8 .8 0 0 1 0 11.2Z" fill="#e9b93a"/><rect x="0" y="3.4" width="14" height="8.6" rx=".8" fill="#f8d86a"/><rect x="3" y="6.6" width="8" height="5.4" fill="#5db1e8"/><rect x="4.2" y="8" width="5.6" height="4" fill="#f8d86a"/></svg>
<svg style="left:150.5px;top:431px" width="14" height="14" viewBox="0 0 14 14"><ellipse cx="7" cy="7" rx="6.8" ry="7" fill="#e0222f"/><ellipse cx="7" cy="7" rx="2.7" ry="4.6" fill="#1e3846"/></svg>
<svg style="left:179px;top:431px" width="14.4" height="14.4" viewBox="0 0 14.4 14.4"><circle cx="7.2" cy="7.2" r="7.2" fill="#fff"/><path d="M7.2 7.2L.97 3.6A7.2 7.2 0 0 1 13.43 3.6Z" fill="#e3402e"/><path d="M7.2 7.2L13.43 3.6A7.2 7.2 0 0 1 7.2 14.4Z" fill="#f8c51c"/><path d="M7.2 7.2L7.2 14.4A7.2 7.2 0 0 1 .97 3.6Z" fill="#2ca14e"/><circle cx="7.2" cy="7.2" r="3.3" fill="#fff"/><circle cx="7.2" cy="7.2" r="2.6" fill="#4688f1"/><circle cx="10.8" cy="10.8" r="3.6" fill="#1f8a70"/></svg>
<svg style="left:208px;top:431px" width="14" height="14" viewBox="0 0 14 14"><rect width="14" height="14" rx="1.6" fill="#b30b14"/><path d="M3 11C4.6 9.6 6.6 5.6 6.8 3.4C6.9 2.4 8 2.6 7.8 3.6C7.4 6 8.6 8.2 11 8.6C12 8.8 11.8 9.8 10.8 9.6C8.4 9.2 5.4 9.8 3.6 11.4C3 11.8 2.6 11.4 3 11Z" fill="none" stroke="#fff" stroke-width=".9"/></svg>
<svg style="left:236px;top:431px" width="14" height="14" viewBox="0 0 14 14"><rect x="2.6" y=".6" width="11" height="12.8" fill="#fff"/><path d="M9 3H12.6M9 5H12.6M9 7H12.6M9 9H12.6M9 11H12.6" stroke="#2a64b4" stroke-width=".7"/><path d="M0 1.6L8.2 .2V13.8L0 12.4Z" fill="#2a5caa"/></svg>
<div class="a" style="left:237px;top:433.5px;font-size:8px;font-weight:bold;color:#fff;line-height:9px">W</div>
<svg style="left:266px;top:432px" width="12.4" height="12.4" viewBox="0 0 12.4 12.4"><rect width="12.4" height="12.4" rx="3.2" fill="#4a8cf7"/><rect x="2.4" y="4.2" width="5.4" height="4.2" rx="1" fill="#fff"/><path d="M8.2 5.6L10.2 4.3V8.3L8.2 7Z" fill="#fff"/></svg>

<svg style="left:614px;top:436px" width="7.4" height="4.4" viewBox="0 0 7.4 4.4" fill="none" stroke="#fff" stroke-width=".9"><path d="M.4 4L3.7 .6L7 4"/></svg>
<svg style="left:628px;top:432.5px" width="9" height="11" viewBox="0 0 9 11" fill="none" stroke="#fff" stroke-width=".85"><rect x=".5" y="3" width="5" height="6" rx=".8"/><path d="M5.8 4.8L8.4 3.6V8.4L5.8 7.2M1.4 1.6C2.4 .6 3.8 .6 4.8 1.6M1.6 10.4H4.6"/></svg>
<svg style="left:642px;top:433.5px" width="8" height="9" viewBox="0 0 8 9"><path d="M4 .2L7.8 1.4V4.6C7.8 6.8 6 8.2 4 8.8C2 8.2 .2 6.8 .2 4.6V1.4Z" fill="#fff"/><path d="M4 .2V8.8C6 8.2 7.8 6.8 7.8 4.6V1.4Z" fill="#d9d9d9"/><path d="M5 9L7 5.6L9 9Z" fill="#f2b01e"/></svg>
<svg style="left:656.5px;top:433px" width="6" height="10.5" viewBox="0 0 6 10.5"><rect x="1.3" y="0" width="3.4" height="6.4" rx="1.7" fill="#fff"/><path d="M.4 5A2.6 2.6 0 0 0 5.6 5M3 7.8V9.6M1.2 10H4.8" fill="none" stroke="#fff" stroke-width=".8"/></svg>
<svg style="left:669px;top:435.5px" width="10" height="5.4" viewBox="0 0 10 5.4"><rect x="1.6" y=".4" width="8" height="4.6" rx=".6" fill="#fff"/><path d="M0 2.7H1.6M1 1.6V3.8" stroke="#fff" stroke-width=".9"/></svg>
<svg style="left:684.5px;top:434px" width="8.4" height="8.4" viewBox="0 0 8.4 8.4" fill="none" stroke="#fff" stroke-width=".85"><path d="M.4 8A7.6 7.6 0 0 1 8 .4"/><path d="M2.6 8A5.4 5.4 0 0 1 8 2.6" opacity=".8"/><path d="M4.8 8A3.2 3.2 0 0 1 8 4.8" opacity=".8"/><circle cx="7.4" cy="7.4" r=".9" fill="#fff" stroke="none"/></svg>
<svg style="left:697px;top:434px" width="10" height="8.4" viewBox="0 0 10 8.4" fill="none" stroke="#fff" stroke-width=".85"><path d="M.4 2.9H2.2L4.4 .8V7.6L2.2 5.5H.4Z"/><path d="M5.8 2.8C6.6 3.6 6.6 4.8 5.8 5.6M7.2 1.6C8.8 3 8.8 5.4 7.2 6.8"/></svg>
<div class="a" style="left:713.0px;top:433.7px;font-size:7.15px;letter-spacing:-0.438px;line-height:8.94px;color:#fff;">УКР</div>
<div class="a" style="left:742.0px;top:429.0px;font-size:6.41px;letter-spacing:-0.260px;line-height:8.01px;color:#fff;">13:24</div>
<div class="a" style="left:734.0px;top:439.1px;font-size:6.81px;letter-spacing:-0.242px;line-height:8.51px;color:#fff;">01.11.2022</div>
<svg style="left:776px;top:433px" width="9" height="9" viewBox="0 0 9 9"><path d="M.4 .4H8.6V6.4H3.4L1.6 8.4V6.4H.4Z" fill="#fff"/><path d="M1.8 2.2H7.2M1.8 3.6H7.2M1.8 5H5.6" stroke="#1c2f4c" stroke-width=".6"/></svg>
<div class="a" style="left:780.8px;top:437.6px;width:8px;height:8px;border-radius:50%;background:#1a2e4c;border:.8px solid #fff;color:#fff;font-size:5.5px;line-height:6.4px;text-align:center">1</div>
</body></html>
